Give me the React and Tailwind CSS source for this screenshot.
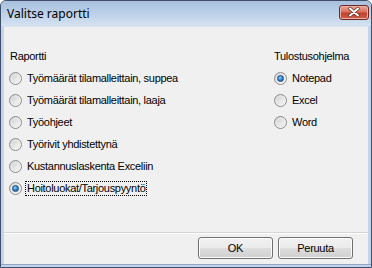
import React from "react";

function Radio({ checked }) {
  return (
    <span className="relative flex h-[13px] w-[13px] shrink-0 items-center justify-center rounded-full border border-[#8a8a8a] bg-gradient-to-br from-[#cfcfcf] via-[#f0f0f0] to-[#ffffff]">
      <span className="absolute inset-[1px] rounded-full border border-[#e4e4e4] bg-gradient-to-br from-[#d2d2d2] to-[#f8f8f8]" />
      {checked && (
        <span className="relative h-[7px] w-[7px] rounded-full border border-[#1c4e80] bg-[radial-gradient(circle_at_40%_35%,#9fd4ff_0%,#3a8ad6_45%,#0f4f93_100%)]" />
      )}
    </span>
  );
}

function Row({ label, checked, focus }) {
  return (
    <div className="flex h-[22px] items-center">
      <Radio checked={checked} />
      <span
        className={
          "ml-[3px] px-[1px] leading-[13px] " +
          (focus ? "border border-dotted border-black" : "border border-transparent")
        }
      >
        {label}
      </span>
    </div>
  );
}

function Btn({ children }) {
  return (
    <button className="flex h-[22px] w-[75px] items-center justify-center rounded-[3px] border border-[#707070] bg-[linear-gradient(to_bottom,#f2f2f2_0%,#ebebeb_50%,#dddddd_51%,#cfcfcf_100%)] text-[11px] text-black shadow-[inset_0_0_0_1px_#fcfcfc]">
      {children}
    </button>
  );
}

export default function App() {
  return (
    <div
      className="flex h-[268px] w-[372px] flex-col overflow-hidden rounded-t-[6px] border border-[#3d4e66] bg-[#c2d5ec] text-[11px] tracking-[-0.3px] text-black"
      style={{ fontFamily: '"Liberation Sans", Arial, sans-serif' }}
    >
      <div className="flex h-[25px] shrink-0 items-center bg-[linear-gradient(to_bottom,#a8c0dd_0%,#bcd0e8_50%,#d5e2f2_100%)] pl-[6px] pr-[2px]">
        <span
          className="flex-1 text-[12px] tracking-normal text-black"
          style={{ fontFamily: '"Noto Sans", "Liberation Sans", sans-serif' }}
        >
          Valitse raportti
        </span>
        <div className="mb-[3px] flex h-[15px] w-[30px] items-center justify-center rounded-[3px] border border-[#6e2a22] bg-[linear-gradient(to_bottom,#e9a799_0%,#d8715d_45%,#c43f2e_55%,#d0604a_100%)] shadow-[inset_0_0_0_1px_#eab2a6]">
          <svg width="12" height="10" viewBox="0 0 12 10">
            <path d="M2 1.5 L10 8.5 M10 1.5 L2 8.5" stroke="#5a2018" strokeWidth="3.2" strokeLinecap="round" />
            <path d="M2 1.5 L10 8.5 M10 1.5 L2 8.5" stroke="#ffffff" strokeWidth="2" strokeLinecap="round" />
          </svg>
        </div>
      </div>

      <div className="mx-[3px] flex flex-1 flex-col border-t border-[#dce5f0] bg-[#f0f0f0]">
        <div className="flex flex-1 pt-[18px]">
          <div className="ml-[5px] flex w-[265px] flex-col">
            <div className="flex h-[22px] items-center pl-[1px]">Raportti</div>
            <Row label="Työmäärät tilamalleittain, suppea" />
            <Row label="Työmäärät tilamalleittain, laaja" />
            <Row label="Työohjeet" />
            <Row label="Työrivit yhdistettynä" />
            <Row label="Kustannuslaskenta Exceliin" />
            <Row label="Hoitoluokat/Tarjouspyyntö" checked focus />
          </div>
          <div className="flex flex-col">
            <div className="flex h-[22px] items-center">Tulostusohjelma</div>
            <Row label="Notepad" checked />
            <Row label="Excel" />
            <Row label="Word" />
          </div>
        </div>
        <div className="h-[1px] bg-[#d5d5d5]" />
        <div className="h-[1px] bg-[#ffffff]" />
        <div className="flex h-[30px] shrink-0 items-start justify-end gap-[5px] pr-[15px] pt-[3px]">
          <Btn>OK</Btn>
          <Btn>Peruuta</Btn>
        </div>
      </div>
      <div className="h-[3px] shrink-0 border-t border-[#8ea6c4]" />
    </div>
  );
}
